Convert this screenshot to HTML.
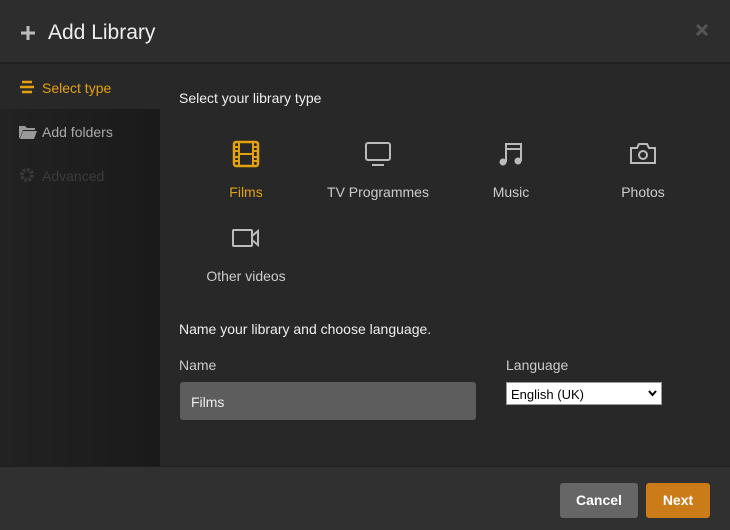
<!DOCTYPE html>
<html><head><style>
*{margin:0;padding:0;box-sizing:border-box}
body{width:730px;height:530px;background:#282828;font-family:"Liberation Sans",Arial,sans-serif;position:relative;overflow:hidden;color:#eee}
.hdr{position:absolute;left:0;top:0;width:730px;height:64px;background:#2d2d2d;border-bottom:2px solid #202020}
.hdr .t{position:absolute;left:48px;top:21px;font-size:21px;color:#eee}
.side{position:absolute;left:0;top:65px;width:160px;height:401px;background:linear-gradient(90deg,#222,#1a1a1a)}
.si{position:absolute;left:42px;font-size:14px}
.main{position:absolute;left:160px;top:65px;width:570px;height:401px;background:#282828}
.lbl{position:absolute;font-size:14px;color:#eee}
.it{position:absolute;width:140px;text-align:center;font-size:14px;color:#ccc}
.it svg{display:block;margin:0 auto 16px}
.foot{position:absolute;left:0;top:466px;width:730px;height:64px;background:#303030;border-top:1px solid #1f1f1f}
.btn{position:absolute;top:16px;height:35px;border-radius:3px;font-weight:bold;font-size:14px;color:#fff;text-align:center;line-height:35px}
</style></head><body>
<div class="hdr">
<svg style="position:absolute;left:20px;top:25px" width="16" height="16"><path d="M8 1V15M1 8H15" stroke="#bbb" stroke-width="3"/></svg>
<div class="t">Add Library</div>
<svg style="position:absolute;left:696px;top:24px" width="12" height="12"><path d="M1 1L11 11M11 1L1 11" stroke="#555" stroke-width="3"/></svg>
</div>
<div class="side">
<div style="position:absolute;left:0;top:0;width:160px;height:44px;background:#282828"></div>
<svg style="position:absolute;left:19px;top:15px" width="16" height="14"><path d="M3 2H13M1 7H15M3 12H13" stroke="#e5a00d" stroke-width="2.5"/></svg>
<div class="si" style="top:15px;color:#e5a00d">Select type</div>
<svg style="position:absolute;left:19px;top:60px" width="18" height="14"><path d="M0 1H6L8 3H16V5H4L1 13H0Z M4 6H18L15 14H1Z" fill="#999"/></svg>
<div class="si" style="top:59px;color:#aaa">Add folders</div>
<svg style="position:absolute;left:20px;top:103px" width="14" height="14"><circle cx="7" cy="7" r="5" fill="none" stroke="#3a3a3a" stroke-width="4" stroke-dasharray="2.5 1.4"/></svg>
<div class="si" style="top:103px;color:#3c3c3c">Advanced</div>
</div>
<div class="main">
<div class="lbl" style="left:19px;top:25px">Select your library type</div>
<div class="it" style="left:16px;top:75px;color:#e5a00d"><svg width="28" height="28" viewBox="0 0 28 28"><rect x="2" y="2" width="24" height="24" rx="2" fill="none" stroke="#e5a00d" stroke-width="2.5"/><path d="M7 2V26M21 2V26M7 14H21M2 7H7M2 11H7M2 17H7M2 21H7M21 7H26M21 11H26M21 17H26M21 21H26" stroke="#e5a00d" stroke-width="2"/></svg>Films</div>
<div class="it" style="left:148px;top:75px"><svg width="28" height="28" viewBox="0 0 28 28"><rect x="2" y="3" width="24" height="17" rx="2" fill="none" stroke="#bbb" stroke-width="2"/><path d="M8 25H20" stroke="#bbb" stroke-width="2"/></svg>TV Programmes</div>
<div class="it" style="left:281px;top:75px"><svg width="28" height="28" viewBox="0 0 28 28"><path d="M9 22V4H24V21M9 9H24" fill="none" stroke="#bbb" stroke-width="2"/><circle cx="6" cy="22" r="3.5" fill="#bbb"/><circle cx="21" cy="21" r="3.5" fill="#bbb"/></svg>Music</div>
<div class="it" style="left:413px;top:75px"><svg width="28" height="28" viewBox="0 0 28 28"><path d="M2 8H8L10 4H18L20 8H26V23H2Z" fill="none" stroke="#bbb" stroke-width="2"/><circle cx="14" cy="15" r="4" fill="none" stroke="#bbb" stroke-width="2"/></svg>Photos</div>
<div class="it" style="left:16px;top:159px"><svg width="28" height="28" viewBox="0 0 28 28"><rect x="1" y="6" width="19" height="16" rx="1" fill="none" stroke="#bbb" stroke-width="2"/><path d="M20 12L26 7V21L20 16" fill="none" stroke="#bbb" stroke-width="2"/></svg>Other videos</div>
<div class="lbl" style="left:19px;top:256px">Name your library and choose language.</div>
<div class="lbl" style="left:19px;top:292px;color:#ccc">Name</div>
<div style="position:absolute;left:20px;top:317px;width:296px;height:38px;background:#5d5d5d;border-radius:3px;font-size:14px;color:#eee;padding:12px 11px">Films</div>
<div class="lbl" style="left:346px;top:292px;color:#ccc">Language</div>
<div style="position:absolute;left:346px;top:317px;width:156px;height:23px;background:#fff;border:1px solid #999;font-size:13px;color:#000;padding:4px 4px">English (UK)<svg style="position:absolute;right:4px;top:7px" width="9" height="7"><path d="M1 1L4.5 5L8 1" stroke="#000" stroke-width="2" fill="none"/></svg></div>
</div>
<div class="foot">
<div class="btn" style="left:560px;width:78px;background:#666">Cancel</div>
<div class="btn" style="left:646px;width:64px;background:#cc7b19">Next</div>
</div>
</body></html>
